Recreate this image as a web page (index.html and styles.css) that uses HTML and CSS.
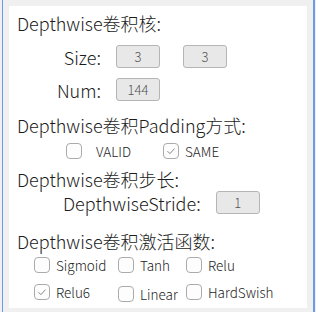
FILE: index.html
```html
<!DOCTYPE html>
<html>
<head>
<meta charset="utf-8">
<link rel="stylesheet" href="styles.css">
</head>
<body>
<div class="frame">
  <div class="panel">
    <div class="title t1">Depthwise卷积核:</div>
    <div class="field-row r-size">
      <span class="flabel">Size:</span>
      <span class="vbox">3</span>
      <span class="vbox second">3</span>
    </div>
    <div class="field-row r-num">
      <span class="flabel">Num:</span>
      <span class="vbox">144</span>
    </div>
    <div class="title t2">Depthwise卷积Padding方式:</div>
    <div class="check-row pad-row">
      <label class="chk"><span class="box"></span><span class="clabel valid">VALID</span></label>
      <label class="chk same"><span class="box checked"><svg viewBox="0 0 16 16"><path d="M4 8.2 L6.8 11 L12 5.2" /></svg></span><span class="clabel">SAME</span></label>
    </div>
    <div class="title t3">Depthwise卷积步长:</div>
    <div class="stride-row">
      <span class="slabel">DepthwiseStride:</span>
      <span class="vbox">1</span>
    </div>
    <div class="title t4">Depthwise卷积激活函数:</div>
    <div class="act-grid a1">
      <label class="chk"><span class="box"></span><span class="clabel">Sigmoid</span></label>
      <label class="chk"><span class="box"></span><span class="clabel">Tanh</span></label>
      <label class="chk"><span class="box"></span><span class="clabel">Relu</span></label>
    </div>
    <div class="act-grid a2">
      <label class="chk"><span class="box checked"><svg viewBox="0 0 16 16"><path d="M4 8.2 L6.8 11 L12 5.2" /></svg></span><span class="clabel">Relu6</span></label>
      <label class="chk low"><span class="box"></span><span class="clabel">Linear</span></label>
      <label class="chk"><span class="box"></span><span class="clabel">HardSwish</span></label>
    </div>
  </div>
</div>
</body>
</html>
```
FILE: styles.css
```css
* { box-sizing: border-box; }
html, body {
  margin: 0;
  padding: 0;
  background: #f0f0f0;
  font-family: "Noto Sans CJK SC", "Noto Sans", sans-serif;
  font-weight: 300;
  color: #1c1c1c;
}
body {
  width: 316px;
  height: 312px;
  padding-left: 2px;
  overflow: hidden;
}
.frame {
  width: 313px;
  height: 312px;
  border-left: 1px solid #6a9be8;
  border-right: 2px solid #6a9be8;
  padding: 6px 5px 3px 6px;
}
.panel {
  background: #fff;
  width: 298px;
  height: 302px;
  display: flex;
  flex-direction: column;
  padding-left: 8px;
}
.title {
  font-size: 18px;
  line-height: 24px;
  height: 24px;
  white-space: nowrap;
}
.t1 { margin-top: 5px; }
.t2 { margin-top: 12px; }
.t3 { margin-top: 8px; }
.t4 { margin-top: 15px; }

.field-row {
  display: flex;
  align-items: center;
  height: 23px;
  margin-top: 10px;
}
.flabel {
  width: 84px;
  text-align: right;
  font-size: 18px;
  margin-right: 15px;
}
.vbox {
  width: 44px;
  height: 23px;
  border: 1px solid #b5b5b5;
  border-radius: 3px;
  background: #e8e8e8;
  font-size: 13px;
  color: #555;
  display: flex;
  align-items: center;
  justify-content: center;
}
.vbox.second { margin-left: 23px; }

.check-row {
  display: flex;
  align-items: center;
  height: 17px;
}
.pad-row {
  margin-top: 5px;
  padding-left: 49px;
}
.chk {
  display: flex;
  align-items: center;
  font-size: 13.5px;
}
.box {
  width: 16px;
  height: 16px;
  border: 1px solid #ababab;
  border-radius: 4px;
  background: #fdfdfd;
  display: flex;
  align-items: center;
  justify-content: center;
}
.box svg {
  width: 16px;
  height: 16px;
}
.box svg path {
  fill: none;
  stroke: #777;
  stroke-width: 1;
}
.clabel { margin-left: 6px; }
.clabel.valid { margin-left: 14px; }
.chk.same { margin-left: 32px; }

.stride-row {
  display: flex;
  align-items: center;
  height: 23px;
  padding-left: 46px;
}
.slabel {
  font-size: 18px;
  margin-right: 15px;
}

.act-grid {
  display: grid;
  grid-template-columns: 84px 68px auto;
  padding-left: 17px;
  height: 17px;
  align-items: center;
}
.a1 { margin-top: 2px; }
.a2 { margin-top: 10px; }
.chk.low { position: relative; top: 2px; }
```
